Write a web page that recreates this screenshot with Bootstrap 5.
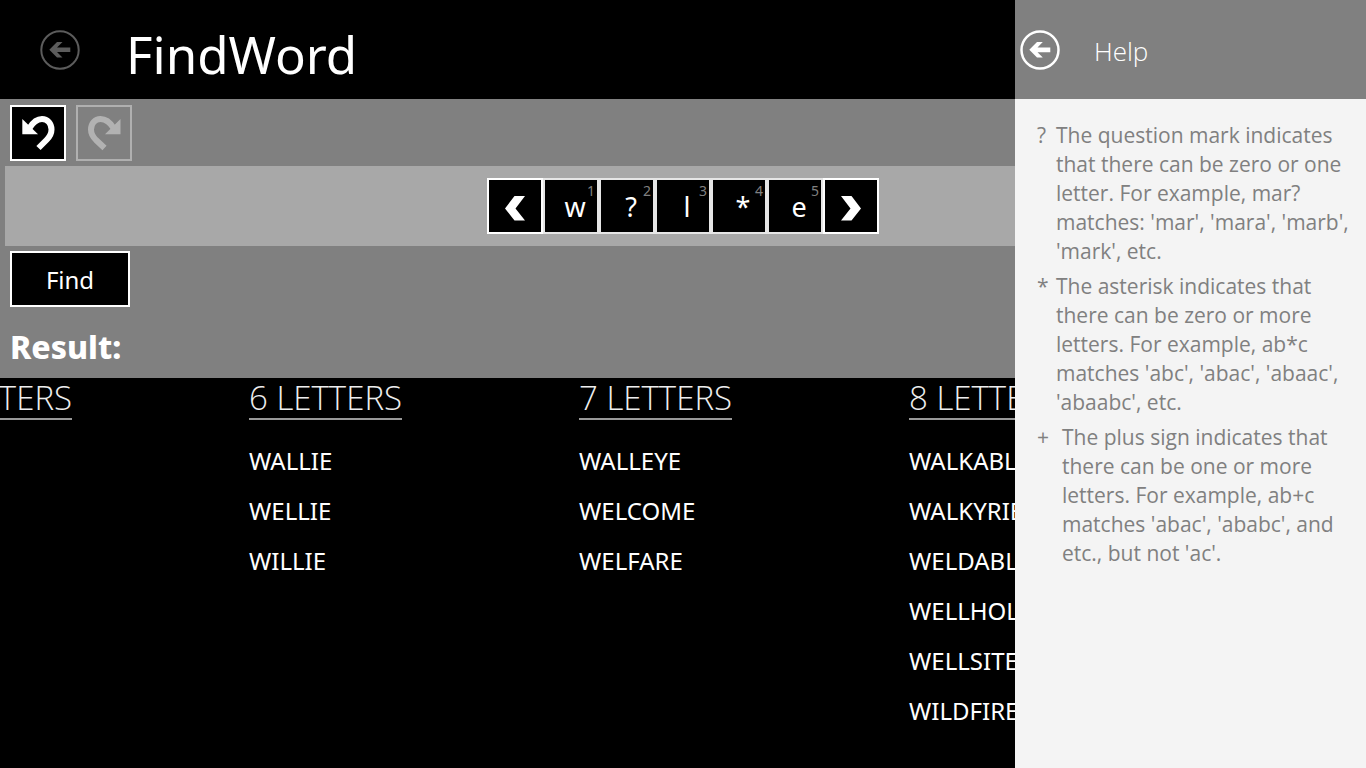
<!DOCTYPE html>
<html lang="en">
<head>
<meta charset="utf-8">
<meta name="viewport" content="width=device-width, initial-scale=1">
<title>FindWord</title>
<link href="https://cdn.jsdelivr.net/npm/bootstrap@5.3.0/dist/css/bootstrap.min.css" rel="stylesheet">
<style>
  body { font-family: "Noto Sans", sans-serif; background: #000; color: #fff; overflow: hidden; }
  .app-header, .help-panel .offcanvas-header { height: 99px; }
  .app-header { padding-left: 40px; gap: 46px; }
  .app-title { font-size: 51px; line-height: 60px; font-weight: 400; padding-top: 9px; }
  .round-btn { width: 40px; height: 40px; padding: 0; border: 0; background: none; color: #fff; }
  .round-btn:disabled { color: #5c5c5c; }
  .workspace { background: #808080; }
  .tool-row { padding: 6px 10px 5px; gap: 10px; }
  .box-btn { width: 56px; height: 56px; padding: 0; border: 2px solid #fff; background: #000; color: #fff; font-size: 24px; line-height: 54px; }
  .box-btn:disabled { background: none; color: #b2b2b2; border-color: #b0b0b0; }
  .find-btn { width: 120px; }
  .pattern-row { background: #a8a8a8; margin-left: 5px; padding: 12px 5px 12px 0; }
  .letter-tile { border-color: #e6e6e6; padding-left: 8px; font-size: 27px; }
  .tile-index { top: 1px; right: 2px; font-size: 14px; line-height: 20px; color: #808080; }
  .find-row { padding: 5px 10px; }
  .result-title { font-size: 32px; line-height: 48px; font-weight: 800; padding: 11px 10px 7px; }
  .groups { margin-left: -81px; }
  .word-group { flex: 0 0 330px; }
  .group-title { font-family: "Open Sans", sans-serif; font-weight: 300; font-size: 33px; line-height: 40px; border-bottom: 2px solid #999; color: #eee; }
  .word-list { padding-top: 16px; }
  .word-list a { color: #fff; font-size: 24px; line-height: 50px; }
  .help-panel { --bs-offcanvas-width: 351px; --bs-offcanvas-bg: #f4f4f4; --bs-offcanvas-border-width: 0; color: #808080; outline: 0; }
  .help-panel .offcanvas-header { background: #808080; color: #fff; padding: 0 5px; gap: 34px; }
  .help-title { font-family: "Open Sans", sans-serif; font-weight: 300; font-size: 26px; line-height: 40px; padding-top: 2px; }
  .help-panel .offcanvas-body { padding: 22px 16px 16px 22px; font-family: "Open Sans", sans-serif; font-size: 21px; line-height: 29px; }
  .help-list { gap: 6px; }
  .help-mark { min-width: 19px; }
  .wide-mark { min-width: 25px; }
</style>
</head>
<body class="vh-100">
<header class="app-header d-flex align-items-center">
  <button class="round-btn" type="button" aria-label="Back" disabled>
    <svg class="d-block" width="40" height="40" viewBox="0 0 40 40"><circle cx="20" cy="20" r="18.7" fill="none" stroke="currentColor" stroke-width="2"/><path d="M9.300 19.800L17 12H22.500L17 17.600H30.300V22H17L22.500 27.600H17Z" fill="currentColor"/></svg>
  </button>
  <h1 class="app-title m-0">FindWord</h1>
</header>
<main>
  <section class="workspace">
    <div class="tool-row d-flex">
      <button class="box-btn" type="button" aria-label="Undo">
        <svg class="d-block" width="52" height="52" viewBox="0 0 52 52"><path d="M17.500 21C21.500 14.500 25.500 12 30 12C35.500 12 39.500 16.500 39.500 22.500C39.500 27 37.500 30 34.500 33L26.500 41" fill="none" stroke="currentColor" stroke-width="6"/><path d="M10.300 12V27.300H26Z" fill="currentColor"/></svg>
      </button>
      <button class="box-btn" type="button" aria-label="Redo" disabled>
        <svg class="d-block" width="52" height="52" viewBox="0 0 52 52"><path d="M35.500 21C31.500 14.500 27.500 12 22.500 12C17 12 13 16.500 13 22.500C13 27 15 30 18 33L26.500 41" fill="none" stroke="currentColor" stroke-width="6"/><path d="M42.500 12V27.300H27Z" fill="currentColor"/></svg>
      </button>
    </div>
    <div class="pattern-row d-flex justify-content-center">
      <button class="box-btn" type="button" aria-label="Previous"><svg class="d-block" width="52" height="52" viewBox="0 0 52 52"><path d="M16 28.500L25.500 16H36L26.500 28.500L36 40.500H25.500Z" fill="currentColor"/></svg></button>
      <button class="box-btn letter-tile position-relative" type="button">w<span class="tile-index position-absolute">1</span></button>
      <button class="box-btn letter-tile position-relative" type="button">?<span class="tile-index position-absolute">2</span></button>
      <button class="box-btn letter-tile position-relative" type="button">l<span class="tile-index position-absolute">3</span></button>
      <button class="box-btn letter-tile position-relative" type="button">*<span class="tile-index position-absolute">4</span></button>
      <button class="box-btn letter-tile position-relative" type="button">e<span class="tile-index position-absolute">5</span></button>
      <button class="box-btn" type="button" aria-label="Next"><svg class="d-block" width="52" height="52" viewBox="0 0 52 52"><path d="M36 28.500L26.500 16H16L25.500 28.500L16 40.500H26.500Z" fill="currentColor"/></svg></button>
    </div>
    <div class="find-row"><button class="box-btn find-btn d-block" type="button">Find</button></div>
    <h2 class="result-title m-0">Result:</h2>
  </section>
  <section class="groups d-flex">
    <div class="word-group"><h3 class="group-title d-inline-block m-0">5 LETTERS</h3></div>
    <div class="word-group">
      <h3 class="group-title d-inline-block m-0">6 LETTERS</h3>
      <ul class="word-list list-unstyled m-0">
        <li><a class="text-decoration-none d-block" href="#">WALLIE</a></li>
        <li><a class="text-decoration-none d-block" href="#">WELLIE</a></li>
        <li><a class="text-decoration-none d-block" href="#">WILLIE</a></li>
      </ul>
    </div>
    <div class="word-group">
      <h3 class="group-title d-inline-block m-0">7 LETTERS</h3>
      <ul class="word-list list-unstyled m-0">
        <li><a class="text-decoration-none d-block" href="#">WALLEYE</a></li>
        <li><a class="text-decoration-none d-block" href="#">WELCOME</a></li>
        <li><a class="text-decoration-none d-block" href="#">WELFARE</a></li>
      </ul>
    </div>
    <div class="word-group">
      <h3 class="group-title d-inline-block m-0">8 LETTERS</h3>
      <ul class="word-list list-unstyled m-0">
        <li><a class="text-decoration-none d-block" href="#">WALKABLE</a></li>
        <li><a class="text-decoration-none d-block" href="#">WALKYRIE</a></li>
        <li><a class="text-decoration-none d-block" href="#">WELDABLE</a></li>
        <li><a class="text-decoration-none d-block" href="#">WELLHOLE</a></li>
        <li><a class="text-decoration-none d-block" href="#">WELLSITE</a></li>
        <li><a class="text-decoration-none d-block" href="#">WILDFIRE</a></li>
      </ul>
    </div>
  </section>
</main>
<aside class="help-panel offcanvas offcanvas-end show" data-bs-backdrop="false" data-bs-scroll="true" tabindex="-1" aria-labelledby="helpTitle">
  <div class="offcanvas-header justify-content-start">
    <button class="round-btn" type="button" data-bs-dismiss="offcanvas" aria-label="Close help">
      <svg class="d-block" width="40" height="40" viewBox="0 0 40 40"><circle cx="20" cy="20" r="18.500" fill="none" stroke="currentColor" stroke-width="2.500"/><path d="M9.300 19.800L17 12H22.800L17.500 17.400H30.300V22.200H17.500L22.800 27.600H17Z" fill="currentColor"/></svg>
    </button>
    <h2 class="help-title m-0" id="helpTitle">Help</h2>
  </div>
  <div class="offcanvas-body">
    <dl class="help-list d-flex flex-column m-0">
      <div class="d-flex"><dt class="help-mark fw-normal">?</dt><dd class="m-0">The question mark indicates that there can be zero or one letter. For example, mar? matches: 'mar', 'mara', 'marb', 'mark', etc.</dd></div>
      <div class="d-flex"><dt class="help-mark fw-normal">*</dt><dd class="m-0">The asterisk indicates that there can be zero or more letters. For example, ab*c matches 'abc', 'abac', 'abaac', 'abaabc', etc.</dd></div>
      <div class="d-flex"><dt class="wide-mark fw-normal">+</dt><dd class="m-0">The plus sign indicates that there can be one or more letters. For example, ab+c matches 'abac', 'ababc', and etc., but not 'ac'.</dd></div>
    </dl>
  </div>
</aside>
<script src="https://cdn.jsdelivr.net/npm/bootstrap@5.3.0/dist/js/bootstrap.bundle.min.js"></script>
</body>
</html>
